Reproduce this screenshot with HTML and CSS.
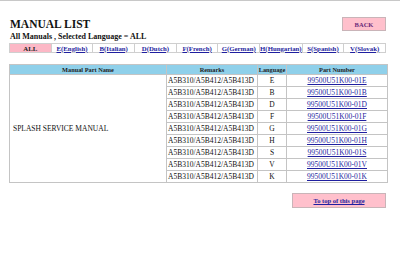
FILE: index.html
```html
<!DOCTYPE html>
<html lang="en">
<head>
  <meta charset="UTF-8">
  <title>Manual List</title>
  <link rel="stylesheet" href="styles.css">
</head>
<body>

  <div class="page" id="top">

    <!-- Title + back -->
    <div class="page-head">
      <h1>MANUAL LIST</h1>
      <a class="pink-btn back-btn" href="#">BACK</a>
    </div>
    <p class="subtitle">All Manuals , Selected Language = ALL</p>

    <!-- Language tabs -->
    <div class="lang-tabs">
      <span class="tab active">ALL</span>
      <a class="tab" href="#">E(English)</a>
      <a class="tab" href="#">B(Italian)</a>
      <a class="tab" href="#">D(Dutch)</a>
      <a class="tab" href="#">F(French)</a>
      <a class="tab" href="#">G(German)</a>
      <a class="tab" href="#">H(Hungarian)</a>
      <a class="tab" href="#">S(Spanish)</a>
      <a class="tab" href="#">V(Slovak)</a>
    </div>

    <!-- Manuals -->
    <table class="manual-table">
      <colgroup>
        <col class="c-name">
        <col class="c-remarks">
        <col class="c-lang">
        <col class="c-part">
      </colgroup>
      <thead>
        <tr>
          <th>Manual Part Name</th>
          <th>Remarks</th>
          <th>Language</th>
          <th>Part Number</th>
        </tr>
      </thead>
      <tbody>
        <tr>
          <td class="name" rowspan="9">SPLASH SERVICE MANUAL</td>
          <td>A5B310/A5B412/A5B413D</td>
          <td class="center">E</td>
          <td class="center"><a href="#">99500U51K00-01E</a></td>
        </tr>
        <tr>
          <td>A5B310/A5B412/A5B413D</td>
          <td class="center">B</td>
          <td class="center"><a href="#">99500U51K00-01B</a></td>
        </tr>
        <tr>
          <td>A5B310/A5B412/A5B413D</td>
          <td class="center">D</td>
          <td class="center"><a href="#">99500U51K00-01D</a></td>
        </tr>
        <tr>
          <td>A5B310/A5B412/A5B413D</td>
          <td class="center">F</td>
          <td class="center"><a href="#">99500U51K00-01F</a></td>
        </tr>
        <tr>
          <td>A5B310/A5B412/A5B413D</td>
          <td class="center">G</td>
          <td class="center"><a href="#">99500U51K00-01G</a></td>
        </tr>
        <tr>
          <td>A5B310/A5B412/A5B413D</td>
          <td class="center">H</td>
          <td class="center"><a href="#">99500U51K00-01H</a></td>
        </tr>
        <tr>
          <td>A5B310/A5B412/A5B413D</td>
          <td class="center">S</td>
          <td class="center"><a href="#">99500U51K00-01S</a></td>
        </tr>
        <tr>
          <td>A5B310/A5B412/A5B413D</td>
          <td class="center">V</td>
          <td class="center"><a href="#">99500U51K00-01V</a></td>
        </tr>
        <tr>
          <td>A5B310/A5B412/A5B413D</td>
          <td class="center">K</td>
          <td class="center"><a href="#">99500U51K00-01K</a></td>
        </tr>
      </tbody>
    </table>

    <div class="page-foot">
      <a class="pink-btn top-btn" href="#top">To top of this page</a>
    </div>

  </div>

</body>
</html>
```

FILE: styles.css
```css
/* Reset */
* {
  margin: 0;
  padding: 0;
  box-sizing: border-box;
}

body {
  font-family: "Liberation Serif", "Times New Roman", serif;
  color: #111;
  background: #fff;
  border-top: 1px solid #c8c8c8;
}

a {
  color: #1f1fa0;
}

.page {
  width: 377px;
  margin-left: 9px;
  padding-top: 16px;
}

/* Header */
.page-head {
  display: flex;
  justify-content: space-between;
  align-items: flex-start;
  height: 14px;
}

h1 {
  font-size: 11.5px;
  line-height: 14px;
  font-weight: bold;
  margin-left: 1px;
}

.pink-btn {
  display: flex;
  align-items: center;
  justify-content: center;
  background: #ffc0cc;
  border: 1px solid #c9b4b8;
  font-weight: bold;
  font-size: 6.5px;
}

.back-btn {
  width: 44px;
  height: 14px;
  color: #6a2a7a;
  text-decoration: none;
}

.subtitle {
  font-size: 8px;
  line-height: 9px;
  font-weight: bold;
  margin-top: 1px;
  margin-left: 1px;
}

/* Language tabs */
.lang-tabs {
  display: grid;
  grid-template-columns: repeat(9, 1fr);
  height: 10px;
  margin-top: 2px;
  border: 1px solid #cfcfcf;
  border-right: none;
}

.tab {
  display: flex;
  align-items: center;
  justify-content: center;
  font-size: 6.8px;
  font-weight: bold;
  border-right: 1px solid #cfcfcf;
  white-space: nowrap;
}

.tab.active {
  background: #fcb8c6;
  color: #222;
}

/* Manual table */
.manual-table {
  width: 378px;
  margin-top: 11px;
  border-collapse: collapse;
  table-layout: fixed;
  border: 1px solid #c4c4c4;
}

.c-name { width: 157px; }
.c-remarks { width: 91px; }
.c-lang { width: 29px; }
.c-part { width: 101px; }

.manual-table th {
  background: #8fd0ea;
  height: 10px;
  font-size: 6.3px;
  font-weight: bold;
  border: 1px solid #c4c4c4;
  color: #222;
}

.manual-table td {
  height: 12px;
  font-size: 7.5px;
  line-height: 8px;
  border: 1px solid #c4c4c4;
  padding: 0 1px;
  white-space: nowrap;
}

.manual-table td.name {
  padding-left: 3px;
  vertical-align: middle;
}

.manual-table td.center {
  text-align: center;
}

/* Footer */
.page-foot {
  display: flex;
  justify-content: flex-end;
  margin-top: 10px;
}

.top-btn {
  width: 94px;
  height: 15px;
  color: #1f1fa0;
  text-decoration: underline;
}
```
